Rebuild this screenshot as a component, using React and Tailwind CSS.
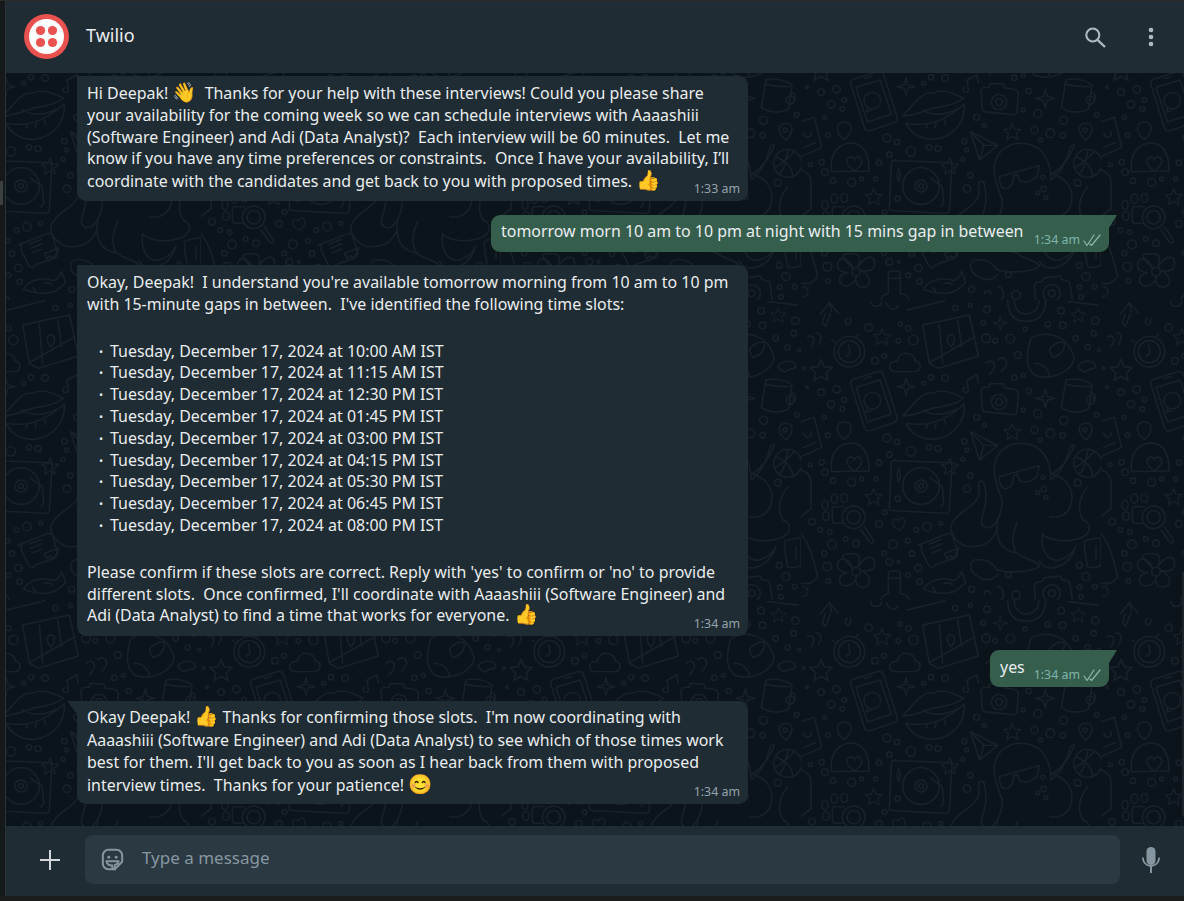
import React from "react";

const SL = ["Tuesday, December 17, 2024 at 10:00 AM IST","Tuesday, December 17, 2024 at 11:15 AM IST","Tuesday, December 17, 2024 at 12:30 PM IST","Tuesday, December 17, 2024 at 01:45 PM IST","Tuesday, December 17, 2024 at 03:00 PM IST","Tuesday, December 17, 2024 at 04:15 PM IST","Tuesday, December 17, 2024 at 05:30 PM IST","Tuesday, December 17, 2024 at 06:45 PM IST","Tuesday, December 17, 2024 at 08:00 PM IST"];

const star = "M0-32 9-11 32-9 15 6 20 28 0 16-20 28-15 6-32-9-9-11Z";
const spark = "M0-30 6-6 30 0 6 6 0 30-6 6-30 0-6-6Z";
const heart = "M0 24C-30 4-28-18-12-20-5-21 0-15 0-10 0-15 5-21 12-20 28-18 30 4 0 24Z";
const dots = [[203,83,11],[322,85,8],[298,72,6],[292,122,7],[337,120,14],[222,182,10],[250,167,7],[463,24,8],[508,16,6],[558,28,10],[547,68,7],[555,115,13],[583,122,7],[628,116,13],[650,165,10],[673,87,6],[740,73,8],[785,76,10],[780,32,10],[883,62,11],[824,115,8],[878,100,8],[860,142,8],[895,150,5],[390,232,8],[432,234,10],[368,250,6],[640,233,8],[667,226,6],[683,273,8],[667,330,6],[710,341,12],[788,361,12],[887,344,7],[527,352,9],[550,376,6],[700,390,11],[748,400,13],[785,406,8],[718,420,6],[490,424,8],[497,450,6],[486,478,6],[258,414,12],[288,426,8],[265,464,8],[330,454,14],[384,442,8],[411,446,9],[234,488,8],[62,487,8],[72,517,10],[28,494,6],[96,542,8],[152,547,12],[182,537,6],[224,537,6],[508,526,8],[498,566,11],[830,548,10],[726,532,6],[728,567,8],[710,578,6],[735,592,6],[251,637,7],[234,671,10],[33,665,10],[58,690,7],[86,697,7],[346,690,7],[378,680,13],[419,670,6],[134,717,7],[165,730,10],[93,733,13],[70,760,8],[275,733,13],[320,722,7],[250,760,7],[333,761,8],[265,785,10],[293,785,4],[352,804,11],[322,826,7],[356,845,8],[79,800,13],[82,843,7],[512,868,9],[622,824,9],[835,796,9],[855,830,12],[881,860,7],[836,862,7],[645,886,13],[840,890,7],[70,352,6],[90,313,11],[124,327,7],[130,299,7],[107,268,11],[60,277,10],[18,262,4],[80,406,7],[8,205,4]];

function Doodles() {
  return (
    <svg className="absolute inset-0 w-full h-full" xmlns="http://www.w3.org/2000/svg">
      <defs>
        <pattern id="wp" width="300" height="300" patternUnits="userSpaceOnUse" x="795" y="227">
          <g transform="scale(0.33333)" fill="none" stroke="#182129" strokeWidth="4.200" strokeLinecap="round" strokeLinejoin="round">
            {dots.map((d, i) => <circle key={i} cx={d[0]} cy={d[1]} r={d[2]} />)}
            <path transform="translate(60 212) scale(1.050)" d={star} />
            <path transform="translate(243 112) scale(.8)" d={star} />
            <path transform="translate(832 46) scale(.7)" d={star} />
            <path transform="translate(634 396) scale(.8)" d={star} />
            <path transform="translate(218 592) scale(.8)" d={star} />
            <path transform="translate(447 500) scale(.8)" d={star} />
            <path transform="translate(598 70) scale(.7)" d={spark} />
            <path transform="translate(315 260) scale(.9)" d={spark} />
            <path transform="translate(733 295) scale(.95)" d={spark} />
            <path d="M58 42 85 8 112 40 M85 8 92 35 M72 42 64 70 74 78 88 42" />
            <path d="M140 55c-8 0-10 18 0 20 8-2 12-14 8-20M210 5c0 18 30 20 32 0M256 8c10 24 30 24 34 10M318 30 432 2" />
            <path d="M20 110c20-8 24 12 10 30M45 100c15-6 20 14 8 34" />
            <circle cx="145" cy="155" r="46" />
            <circle cx="145" cy="155" r="33" />
            <path d="M143 135l4 26-12 8M100 125l-8-5M165 110l8-8" />
            <path d="M365 75 505 45 532 168 412 205 385 190ZM385 188 522 110M415 75 425 190M470 60l12 80" />
            <path d="M450 105c-14 0-16 20 0 35 14-15 14-35 0-35Z" />
            <path d="M280 215c-22-4-18-34 8-30 6-36 54-30 54-2 22 2 20 32-4 32Z" />
            <path d="M620 0c0 48 22 64 56 64s58-20 58-64M640 0c0 30 18 42 36 42s38-14 38-42M800 5l90 10" />
            <path d="M555 190c12-14 30-4 24 14-2 8-8 14-14 20M590 180c12-14 30-4 26 14-2 8-8 14-14 20" />
            <path d="M690 115c34-22 110-20 130 60-10 40-70 70-120 50-20-20-30-46-10-110ZM745 150c10-20 30-26 45-22 2 20-10 40-36 44ZM700 190c30 0 42 20 46 40" />
            <path d="M830 200c14-22 50-22 55 0-8 12-24 4-30 14-8 6-16-6-25-14Z" />
            <path d="M150 255c-4-10 2-16 10-18l70-22c10-2 16 2 18 10l40 125c2 10-2 16-10 18l-70 24c-10 2-16-2-18-10Z" />
            <path d="M165 262l72-22 34 102-72 24Z" />
            <circle cx="214" cy="302" r="25" />
            <path d="M200 325l-5 12 16-6M190 236l20-6" />
            <path d="M305 348c30-30 60-78 90-68 30-16 60 0 92 14-20 20-60 26-90 30-30 10-60 24-92 24Z" />
            <path d="M315 370c60 10 110 0 175-58 4 50-30 100-90 106-40 0-70-18-85-48ZM365 330c20 14 60 20 100-2M380 372l-4 12M405 370l-2 14M430 360l4 14" />
            <path d="M492 262a8 8 0 1 0 10 6l-4-26 30-18 4 24M498 240l30-16" />
            <path d="M552 262c-8 0-12 6-12 12l4 50c0 8 6 12 12 12l80 8c8 0 12-4 12-12l4-50c0-8-4-12-12-14l-28-4-4-12-40-2-4 12Z" />
            <circle cx="594" cy="306" r="23" />
            <circle cx="594" cy="306" r="10" />
            <path d="M795 240c20-6 60-2 78 16l-10 70c-20 14-60 14-82-4ZM792 252c24 6 50 8 74 8M872 280c16-6 14 36-8 34" />
            <circle cx="868" cy="300" r="12" />
            <path d="M855 420c-30-24-24-50 0-50 24 0 24 26 0 50Z" />
            <circle cx="852" cy="390" r="6" />
            <path d="M130 418c-30-20-26-52 0-52 26 0 28 32 0 52ZM92 515c-10-60 30-88 60-86 30 0 54 30 52 84Z" />
            <path transform="translate(160 490) scale(.95)" d={heart} />
            <path d="M0 365 40 352 62 442 0 470M8 400c10 20 24 10 22-4M8 442l36-14" />
            <path d="M0 510c18 4 30 20 30 36v80L0 650M0 700c22 30 34 60 50 130-14 22-30 22-50 20" />
            <path d="M5 860c22 0 20 30 0 30" />
            <path d="M280 482 445 488c6 0 8 4 8 10l-8 132c0 6-4 10-10 10l-160-8c-6 0-10-4-10-10l6-132c0-6 6-10 14-10Z" />
            <circle cx="360" cy="558" r="55" />
            <circle cx="360" cy="558" r="18" />
            <circle cx="360" cy="558" r="7" />
            <path d="M388 534l36 26 4 50-8 10M293 505c-6 20-6 26 0 40 6-14 6-20 0-40Z" />
            <circle cx="290" cy="596" r="8" />
            <path d="M508 395 590 436 536 480ZM508 395 548 436 536 480M548 436l42 0" />
            <path d="M580 520c-6-50 30-92 82-90 60 0 88 50 88 110 14-10 40-30 58-100 6-6 12-8 12-2-14 34-40 70-68 84 40 10 66 40 60 80-4 40-40 56-66 48" />
            <path d="M580 520c4 30 14 56 24 80 0 50-30 96-54 80-28-16 20-50 0-130-14-16-20-4-16 20 6 50-70 60-85 110 0 30 30 60 60 60 50 0 64-20 80-50M650 665c-14 30-22 60-6 90 30 30 60 20 72 44-24 20-100 20-128 10-14-22-30-30-60-30-24 0-24 30-6 44 14 12 40 30 70 0M590 660c-6 50 0 90 60 100" />
            <path d="M725 700c-8 50 16 86 50 80 20-6 40-20 50-42-10 30-30 60-70 66-20 0-30-4-40-20M860 560c-30 40-30 70-14 100 30 10 30 50-30 60-30 6-70 0-90-16" />
            <path d="M595 530 715 497 710 520c-2 18-30 30-50 24-8-6-10-14-12-22l-10 4c0 16-4 32-16 38-14 6-22 0-26-20Z" />
            <circle cx="860" cy="490" r="42" />
            <path d="M825 470c30 14 50 36 50 60M862 448c-10 30-8 60-28 74M880 455c-20 20-40 40-56 46" />
            <circle cx="158" cy="652" r="34" />
            <circle cx="158" cy="652" r="20" />
            <path d="M190 680l26 38c6 8-4 14-10 8l-26-36M130 620H102c-6 0-8 4-8 10v30c0 6 4 10 8 10h26" />
            <ellipse cx="100" cy="596" rx="10" ry="14" />
            <ellipse cx="130" cy="594" rx="10" ry="13" />
            <ellipse cx="72" cy="615" rx="9" ry="14" />
            <ellipse cx="75" cy="648" rx="10" ry="13" />
            <path transform="translate(294 672) rotate(-10) scale(.8)" d={heart} />
            <path d="M352 735 442 700c8 0 12 2 14 10l14 50c0 8-2 10-8 14l-58 20-10 10-10-6-22-44c-2-8-2-14 0-18Z" />
            <path d="M385 732l36-14M388 745l36-14M394 758l28-10M430 760l44-16-14 30-14-6-8 8Z" />
            <circle cx="165" cy="815" r="13" />
            <path d="M155 805c-40-40-40-44 0-44 30 0 20 30 16 38 30-40 50-30 50-8 0 24-30 24-40 20 36 20 30 54 0 50-16 0-20-24-14-34-4 30-40 40-50 20-6-20 10-26 24-30-24 0-36-10-30-30 6-16 34-14 44 18Z" />
            <path d="M368 868c10-24 54-40 90-26 10-4 20-14 24-28l12 34-12 10c-20 24-60 30-114 10ZM395 862l10 14M430 850c12-4 24 0 24 6" />
            <path d="M262 880V820c0-10 36-10 36 0v60c14 2 24 10 26 20M262 835h36M262 880c-14 2-20 10-22 20" />
            <path d="M700 860c0-10 6-14 14-14l10-2 4-10 50-6 4 10 14 4c8 0 10 6 12 14l6 44M700 860l4 40" />
            <circle cx="752" cy="880" r="26" />
            <circle cx="752" cy="880" r="10" />
            <path d="M550 882c0-10 16-14 20 0M590 860c16 0 24 30 10 40" />
            <path d="M850 725c14-10 40-10 50-12v84c-20 8-36 6-40 4-6-30-10-60-10-76ZM885 740v36" />
          </g>
        </pattern>
      </defs>
      <rect width="100%" height="100%" fill="url(#wp)" />
    </svg>
  );
}

function E({ children }) {
  return <span className="text-[19.5px] leading-none">{children}</span>;
}

function Meta({ t, out }) {
  return (
    <span className={`absolute right-[8px] bottom-[3px] flex items-center gap-[3px] text-[12.4px] leading-[18px] whitespace-nowrap ${out ? "text-[#80b5aa]" : "text-[#94a3ad]"}`}>
      {t}
      {out && (
        <svg width="18" height="12" viewBox="0 0 18 12" fill="none" stroke="#8fb5a9" strokeWidth="1.200" strokeLinecap="round" strokeLinejoin="round">
          <path d="M1 7l3 4.500L11 1" />
          <path d="M7 10l1.500 1.500L17 1" />
        </svg>
      )}
    </span>
  );
}

function In({ children, tail, cls = "" }) {
  return (
    <div className="relative w-[671px] ml-[77px]">
      {tail && <div className="absolute left-[-10px] top-0 w-[10px] h-[13px] bg-[#202c33] [clip-path:polygon(0_0,100%_0,100%_100%)]" />}
      <div className={`bg-[#202c33] rounded-[9px] rounded-tl-none px-[10px] text-[#e9edef] text-[15.95px] leading-[21.8px] whitespace-pre-wrap ${cls}`}>{children}</div>
    </div>
  );
}

function Out({ children, t, w, pt }) {
  return (
    <div className="flex justify-end pr-[75px]">
      <div className={`relative h-[37px] rounded-[9px] rounded-tr-none bg-[#355e4d] pl-[10px] text-[#e9edef] text-[15.95px] leading-[21.8px] whitespace-nowrap ${pt}`} style={{ width: w }}>
        {children}
        <div className="absolute right-[-8px] top-0 w-[8px] h-[13px] bg-[#355e4d] [clip-path:polygon(0_0,100%_0,0_100%)]" />
        <Meta t={t} out />
      </div>
    </div>
  );
}

export default function App() {
  return (
    <div className="w-[1184px] h-[901px] overflow-hidden bg-[#1b1c1c] flex flex-col font-['Noto_Sans',sans-serif]">
      <div className="h-[1px] bg-[#2b2b2a] shrink-0" />
      <div className="flex-1 flex min-h-0 pb-[5px]">
        <div className="w-[5px] shrink-0 bg-[#15191c] relative">
          <div className="absolute left-0 top-[180px] w-[3px] h-[24px] bg-[#3b4043]" />
        </div>
        <div className="flex-1 min-w-0 flex flex-col border-l border-[#2a3338]">
          <header className="h-[72px] shrink-0 bg-[#202c33] flex items-center pl-[18px]">
            <div className="w-[45px] h-[45px] -mt-[1px] rounded-full bg-[#e9524e] flex items-center justify-center">
              <svg width="35" height="35" viewBox="0 0 35 35">
                <circle cx="17.5" cy="17.5" r="17.5" fill="#fff" />
                <circle cx="11.5" cy="11.5" r="4.600" fill="#e9524e" />
                <circle cx="23.5" cy="11.5" r="4.600" fill="#e9524e" />
                <circle cx="11.5" cy="23.5" r="4.600" fill="#e9524e" />
                <circle cx="23.5" cy="23.5" r="4.600" fill="#e9524e" />
              </svg>
            </div>
            <div className="ml-[17px] -mt-[3px] text-[#e9edef] text-[18px] flex-1">Twilio</div>
            <svg width="24" height="24" viewBox="0 0 24 24" fill="none" stroke="#aebac1" strokeWidth="2.100" className="mr-[41px]">
              <circle cx="9.800" cy="10" r="6.500" />
              <path d="M14.500 14.800l7.500 7.200" strokeWidth="2.300" />
            </svg>
            <svg width="6" height="20" viewBox="0 0 6 20" fill="#aebac1" className="mr-[30px]">
              <circle cx="3" cy="3" r="2.300" /><circle cx="3" cy="10" r="2.300" /><circle cx="3" cy="17" r="2.300" />
            </svg>
          </header>
          <main className="relative flex-1 min-h-0 bg-[#0c141b] overflow-hidden">
            <Doodles />
            <div className="absolute right-0 top-[499px] w-[2px] h-[244px] bg-[#1d252a]" />
            <div className="relative flex flex-col pt-[3px] -ml-[6px] w-[1184px]">
              <In cls="h-[125px] pt-[6px] relative">
                <div>Hi Deepak! <E>👋</E>  Thanks for your help with these interviews! Could you please share</div>
                <div>your availability for the coming week so we can schedule interviews with Aaaashiii</div>
                <div>(Software Engineer) and Adi (Data Analyst)?  Each interview will be 60 minutes.  Let me</div>
                <div>know if you have any time preferences or constraints.  Once I have your availability, I’ll</div>
                <div>coordinate with the candidates and get back to you with proposed times. <E>👍</E></div>
                <Meta t="1:33 am" />
              </In>
              <div className="h-[14px]" />
              <Out t="1:34 am" w={618} pt="pt-[6px]">tomorrow morn 10 am to 10 pm at night with 15 mins gap in between</Out>
              <div className="h-[13px]" />
              <In cls="h-[371px] pt-[7px] relative">
                <div>Okay, Deepak!  I understand you're available tomorrow morning from 10 am to 10 pm</div>
                <div>with 15-minute gaps in between.  I've identified the following time slots:</div>
                <div className="h-[25px]" />
                {SL.map((s) => (
                  <div key={s} className="pl-[12px] flex"><span className="w-[11px] text-[11px]">•</span>{s}</div>
                ))}
                <div className="h-[25px]" />
                <div>Please confirm if these slots are correct. Reply with 'yes' to confirm or 'no' to provide</div>
                <div>different slots.  Once confirmed, I'll coordinate with Aaaashiii (Software Engineer) and</div>
                <div className="-mt-[1px]">Adi (Data Analyst) to find a time that works for everyone. <E>👍</E></div>
                <Meta t="1:34 am" />
              </In>
              <div className="h-[14px]" />
              <Out t="1:34 am" w={119} pt="pt-[7px]">yes</Out>
              <div className="h-[14px]" />
              <In tail cls="h-[103px] pt-[5px] relative">
                <div className="h-[24px]">Okay Deepak! <E>👍</E> Thanks for confirming those slots.  I'm now coordinating with</div>
                <div>Aaaashiii (Software Engineer) and Adi (Data Analyst) to see which of those times work</div>
                <div>best for them. I'll get back to you as soon as I hear back from them with proposed</div>
                <div>interview times.  Thanks for your patience! <E>😊</E></div>
                <Meta t="1:34 am" />
              </In>
            </div>
          </main>
          <footer className="h-[70px] shrink-0 bg-[#202c33] flex items-start pl-[32px] pt-[9px]">
            <svg width="24" height="24" viewBox="0 0 24 24" fill="#d1d7db" className="mt-[13px]"><path d="M11 2h2v9h9v2h-9v9h-2v-9H2v-2h9Z" /></svg>
            <div className="ml-[23px] w-[1035px] h-[49px] rounded-[8px] bg-[#2a3942] flex items-center pl-[16px]">
              <svg width="23" height="23" viewBox="0 0 25 25" fill="none" stroke="#8696a0" strokeWidth="2.200">
                <path d="M8 2h9a6 6 0 0 1 6 6v7l-8 8H8a6 6 0 0 1-6-6V8a6 6 0 0 1 6-6Z" />
                <circle cx="8.500" cy="10" r="1.600" fill="#8696a0" stroke="none" />
                <circle cx="16.500" cy="10" r="1.600" fill="#8696a0" stroke="none" />
                <path d="M6 14.500h13c0 2-1 3.500-4 4v4.500c-1.500 0-3-1.500-3-4-3 0-5.500-1.500-6-4.500Z" />
              </svg>
              <span className="ml-[18px] -mt-[3px] text-[#8696a0] text-[17px]">Type a message</span>
            </div>
            <svg width="20" height="26" viewBox="0 0 20 26" fill="#8696a0" className="ml-[21px] mt-[12px]">
              <rect x="5.500" y="0" width="9" height="18" rx="4.500" />
              <path d="M1 10.500h1.800c0 4.500 3 7.500 7.200 7.500s7.200-3 7.200-7.500H19c0 5-3.500 8.500-8 9.200V26H9v-6.300C4.500 19 1 15.500 1 10.500Z" />
            </svg>
          </footer>
        </div>
      </div>
    </div>
  );
}
